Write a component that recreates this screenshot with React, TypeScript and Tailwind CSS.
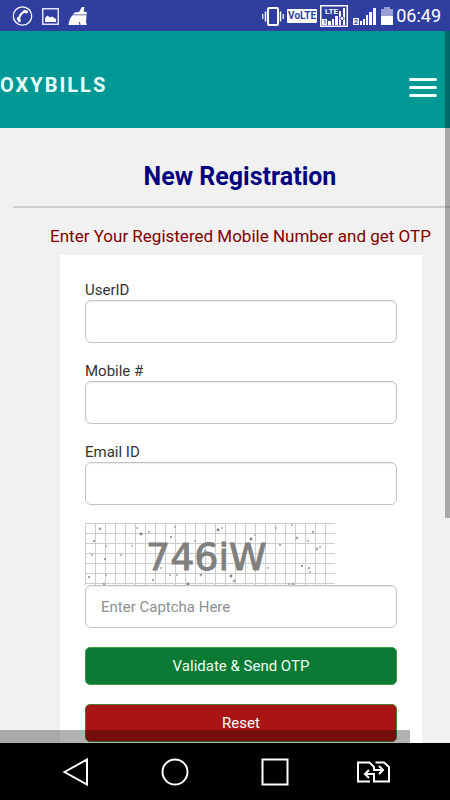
import type { InputHTMLAttributes } from "react";

interface FieldProps extends InputHTMLAttributes<HTMLInputElement> {
  id: string;
  label: string;
}

const inputClass =
  "block h-[43px] w-full rounded-md border border-[#c4c4c4] bg-white px-[15px] text-[15px] text-[#555] shadow-[inset_0_1px_1px_rgba(0,0,0,0.08)] outline-none placeholder:text-[#8f8f8f] focus:border-sky-500";

const Field = ({ id, label, ...rest }: FieldProps) => (
  <div className="mb-[18px]">
    <label htmlFor={id} className="block text-[15px] leading-5 text-[#333]">
      {label}
    </label>
    <input id={id} name={id} className={inputClass} {...rest} />
  </div>
);

const StatusBar = () => (
  <div className="flex h-[31px] shrink-0 items-center justify-between bg-[#303f9f] pt-px pr-[9px] pl-3 text-white">
    <div className="flex items-center gap-[9px]">
      <svg width="21" height="20" viewBox="0 0 21 20" fill="none" stroke="#fff">
        <circle cx="10.5" cy="10" r="9.2" strokeWidth="1.3" />
        <path d="M13 5.5C9 7 7.4 9.5 6.8 13.5" strokeWidth="2" />
        <path d="M12.5 5.2l2 .8M6.3 12.5l1.2 2.2" strokeWidth="3" strokeLinecap="round" />
      </svg>
      <svg width="17" height="17" viewBox="0 0 17 17">
        <rect x=".75" y=".75" width="15.5" height="15.5" fill="none" stroke="#dfe3ff" strokeWidth="1.5" />
        <path d="M3 14v-4l2.5-2.5 2.5 2 2-1 4 2.5V14z" fill="#fff" />
      </svg>
      <svg width="20" height="20" viewBox="0 0 20 20" fill="#fff">
        <path d="M11 6l3-5h2.500l-1 4.500 3 .5.500 2.500H5l1.500-2z" />
        <path d="M4.500 9.200h14l-.5 7 1 2.800H.5c.5-4 1.500-7.500 4-9.800z" />
        <path d="M11.500 16l.5 3" stroke="#303f9f" />
      </svg>
    </div>

    <div className="flex items-center gap-[3px]">
      <svg width="22" height="19" viewBox="0 0 22 19" fill="none" stroke="#fff">
        <rect x="6" y="1" width="10" height="17" rx="1" strokeWidth="2" />
        <path d="M3.5 4.5v10M18.5 4.5v10" strokeWidth="1.5" />
        <path d="M.75 7v5M21.25 7v5" strokeWidth="1.2" />
      </svg>
      <span className="h-[14px] rounded-[1px] bg-white px-px text-[10px] leading-[14px] font-bold text-[#303f9f]">
        VoLTE
      </span>
      <svg width="28" height="22" viewBox="0 0 28 22">
        <rect x=".75" y=".75" width="26.5" height="20.5" fill="none" stroke="#fff" strokeWidth="1.5" />
        <path d="M8 16h3v4H8zM12 14h2v6h-2zM15 11h3v9h-3zM19 6h2v14h-2zM23 3h2v17h-2z" fill="#fff" />
        <rect x="2" y="14" width="5" height="6" fill="#fff" />
        <text x="5" y="9" fontSize="8" fontWeight="700" fill="#fff">LTE</text>
        <text x="3" y="19" fontSize="6" fontWeight="700" fill="#303f9f">1</text>
        <circle cx="22" cy="13.5" r="2" fill="#fff" stroke="#303f9f" />
      </svg>
      <svg width="27" height="22" viewBox="0 0 27 22">
        <path d="M9 16h2v4H9zM12 14h2v6h-2zM15 10h2v10h-2zM18 7h3v13h-3zM22 3h3v17h-3z" fill="#fff" />
        <rect x="2" y="13" width="6" height="7" fill="#fff" />
        <text x="3" y="19" fontSize="7" fontWeight="700" fill="#303f9f">2</text>
      </svg>
      <svg width="12" height="18" viewBox="0 0 12 18">
        <path d="M3 0h6v2h3v7H0V2h3z" fill="#98a0d3" />
        <path d="M0 9h12v9H0z" fill="#fff" />
      </svg>
      <span className="text-[18px] leading-none">06:49</span>
    </div>
  </div>
);

// [x, y, radius]
const specks = [
  [9, 18, 1], [15, 6, 1.4], [21, 23, 1], [20, 36, 1], [7, 32, 1], [21, 52, 1], [4, 54, 1],
  [47, 23, 1], [36, 32, 1], [56, 11, 1.4], [52, 5, 1], [64, 9, 1], [86, 14, 1], [90, 4, 1],
  [76, 45, 1], [68, 57, 1], [85, 52, 1], [92, 52, 1], [103, 61, 1.4], [116, 52, 1.4],
  [110, 18, 1], [133, 7, 1.4], [137, 5, 1], [130, 22, 1], [146, 53, 1.4], [149, 58, 1.4],
  [170, 12, 1], [166, 16, 1.4], [183, 45, 1], [191, 5, 1], [195, 22, 1], [207, 2, 1],
  [212, 15, 1.4], [217, 43, 1], [225, 49, 1], [223, 18, 1], [228, 9, 1], [232, 26, 1.4],
  [235, 24, 1], [224, 45, 1], [204, 61, 1], [208, 61, 1.4], [19, 61, 1], [120, 28, 1.4],
];

const Captcha = () => (
  <svg
    className="block"
    width="250"
    height="62"
    viewBox="0 0 250 62"
    role="img"
    aria-label="Captcha"
  >
    <defs>
      <pattern id="captcha-grid" width="10" height="10" patternUnits="userSpaceOnUse">
        <path d="M.5 0v10M0 .5h10" stroke="#cdcdcd" />
      </pattern>
    </defs>
    <rect width="250" height="62" fill="url(#captcha-grid)" />
    {specks.map(([x, y, r], i) => (
      <circle key={i} cx={x} cy={y} r={r} fill={i % 3 ? "#a8a8a8" : "#808080"} />
    ))}
    <text
      x="61"
      y="47"
      fontSize="38"
      fill="#808080"
      stroke="#808080"
      className="font-['DejaVu_Sans',sans-serif]"
    >
      746iW
    </text>
  </svg>
);

const navButtonClass = "flex flex-1 justify-center";

const NavBar = () => (
  <nav className="flex h-[57px] shrink-0 items-center bg-black px-[26px]">
    <button type="button" aria-label="Back" className={navButtonClass}>
      <svg width="28" height="28" viewBox="0 0 28 28" fill="none" stroke="#fff" strokeWidth="2">
        <path d="M2.5 14L25 1.5v25z" />
      </svg>
    </button>
    <button type="button" aria-label="Home" className={navButtonClass}>
      <svg width="28" height="28" viewBox="0 0 28 28" fill="none" stroke="#fff" strokeWidth="2">
        <circle cx="14" cy="14" r="12.5" />
      </svg>
    </button>
    <button type="button" aria-label="Recent apps" className={navButtonClass}>
      <svg width="28" height="28" viewBox="0 0 28 28" fill="none" stroke="#fff" strokeWidth="2">
        <path d="M1.5 1.5h25v25h-25z" />
      </svg>
    </button>
    <button type="button" aria-label="Switch SIM" className={navButtonClass}>
      <svg width="34" height="22" viewBox="0 0 34 22" fill="none" stroke="#fff" strokeWidth="2">
        <path d="M13 20.5H1v-19h11.5L17 6v3h8" />
        <path d="M18.500 1.500H27l5 4.500v14.500H17V13H8" />
        <path d="M22 5l4 4-4 4M12 9l-4 4 4 4" />
      </svg>
    </button>
  </nav>
);

export default function App() {
  return (
    <div className="flex h-screen flex-col overflow-hidden bg-[#f1f1f1] font-[Roboto,sans-serif]">
      <StatusBar />

      <div className="relative min-h-0 flex-1 overflow-hidden">
        <header className="flex h-[97px] items-center justify-between bg-[#009895] pt-[11px] pr-[13px]">
          <a href="#" className="text-[20px] leading-6 font-bold tracking-[2px] text-[#e6fffc]">
            OXYBILLS
          </a>
          <button type="button" aria-label="Menu" className="flex w-7 flex-col gap-[5px] pt-1">
            <span className="h-[3px] rounded-sm bg-[#effffd]" />
            <span className="h-[3px] rounded-sm bg-[#effffd]" />
            <span className="h-[3px] rounded-sm bg-[#effffd]" />
          </button>
        </header>

        <main className="pt-8">
          <h1 className="pl-[30px] text-center text-[25px] leading-[34px] font-bold text-[#000080]">
            New Registration
          </h1>
          <hr className="mt-3 ml-[13px] border-t-2 border-[#cfcfcf]" />
          <p className="mt-4 pl-[31px] text-center text-[17px] leading-6 whitespace-nowrap text-[#800000]">
            Enter Your Registered Mobile Number and get OTP
          </p>

          <form
            className="mt-[7px] mr-[28px] ml-[60px] bg-white p-[25px]"
            onSubmit={(event) => event.preventDefault()}
          >
            <Field id="userId" label="UserID" />
            <Field id="mobile" label="Mobile #" type="tel" />
            <Field id="email" label="Email ID" type="email" />

            <Captcha />
            <input
              name="captcha"
              aria-label="Captcha"
              placeholder="Enter Captcha Here"
              className={inputClass}
            />

            <button
              type="submit"
              className="mt-[19px] block h-[38px] w-full rounded-[5px] border border-[#3f9a4a] bg-[#087a33] text-[15px] text-[#effff0]"
            >
              Validate &amp; Send OTP
            </button>
            <button
              type="reset"
              className="mt-[19px] block h-[38px] w-full rounded-[5px] border border-[#4d7a2c] bg-[#a91414] text-[15px] text-white"
            >
              Reset
            </button>
          </form>
        </main>

        {/* overlay scrollbars */}
        <div className="absolute top-0 right-0 h-[487px] w-[5px] bg-black/30" />
        <div className="absolute bottom-0 left-0 h-[13px] w-[410px] bg-black/30" />
      </div>

      <NavBar />
    </div>
  );
}
